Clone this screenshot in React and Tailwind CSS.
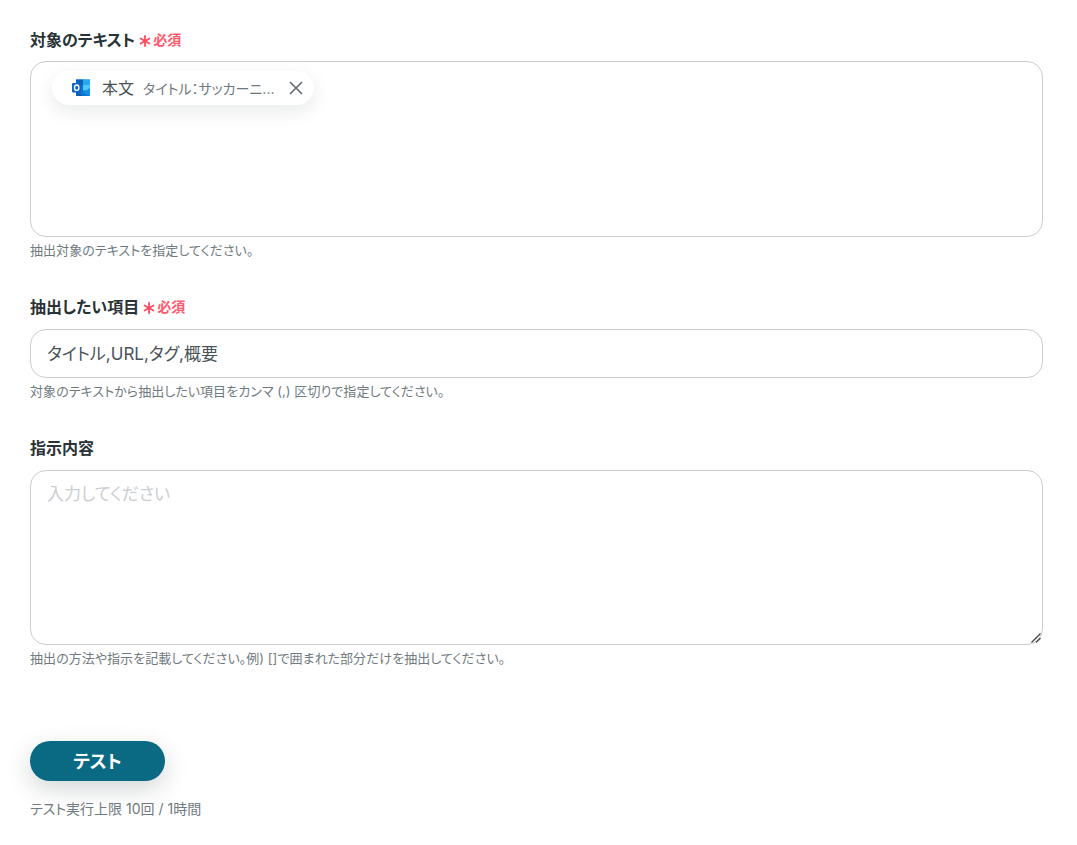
const font = { fontFamily: 'Inter, "Noto Sans CJK JP", sans-serif' };

function Label({ text, required }) {
  return (
    <div className="flex items-center h-[20px] text-[16px] font-bold leading-[20px] text-[#283237]">
      <span>{text}</span>
      {required && (
        <span className="ml-[4px] flex items-center text-[14px] font-bold text-[#ff5a6e]">
          <svg width="12" height="12" viewBox="0 0 12 12" className="mr-[2px] mt-[2px]" fill="none" stroke="#ff4a60" strokeWidth="1.8" strokeLinecap="round">
            <path d="M6 1V11M1.6 3.5L10.4 8.5M10.4 3.5L1.6 8.5" />
          </svg>
          必須
        </span>
      )}
    </div>
  );
}

function Help({ children }) {
  return <p className="mt-[5px] h-[16px] text-[13px] leading-[16px] tracking-[0.05px] text-[#6f7a80]">{children}</p>;
}

function Outlook() {
  return (
    <svg width="20" height="20" viewBox="0 0 20 20" className="shrink-0">
      <rect x="5" y="1.5" width="14" height="16.5" rx="1" fill="#0a78d4" />
      <rect x="5" y="1.5" width="7" height="5.5" fill="#0364b8" />
      <rect x="12" y="1.5" width="7" height="5.5" fill="#28a8ea" />
      <rect x="5" y="7" width="7" height="5.5" fill="#0078d4" />
      <rect x="12" y="7" width="7" height="5.5" fill="#50c8f4" />
      <path d="M5 12.5L12 18H6a1 1 0 0 1-1-1z" fill="#0a5fb0" />
      <path d="M19 10L12 14.5 19 18z" fill="#1490df" />
      <rect x="1" y="5" width="9.5" height="9.5" rx="1" fill="#1066c8" />
      <ellipse cx="5.7" cy="9.7" rx="2.2" ry="2.7" fill="none" stroke="#fff" strokeWidth="1.3" />
    </svg>
  );
}

export default function App() {
  return (
    <div style={font} className="w-[1077px] h-[845px] bg-white px-[30px] pt-[30px] overflow-hidden [font-feature-settings:'palt']">
      <Label text="対象のテキスト" required />
      <div className="mt-[11px] w-[1013px] h-[176px] rounded-[16px] border border-[#c9ccd2] pl-[21px] pt-[9px]">
        <div className="flex items-center w-[262px] h-[34px] rounded-full bg-white pl-[19px] shadow-[0_6px_18px_rgba(40,50,55,0.1)]">
          <Outlook />
          <span className="ml-[11px] w-[32px] text-[16px] text-[#4a5358] whitespace-nowrap">本文</span>
          <span className="ml-[9px] w-[136px] text-[14px] text-[#6f7a80] whitespace-nowrap">タイトル：サッカーニ...</span>
          <svg width="16" height="16" viewBox="0 0 16 16" className="ml-[9px] shrink-0" fill="none" stroke="#5c666b" strokeWidth="1.5">
            <path d="M2 2L14 14M14 2L2 14" />
          </svg>
        </div>
      </div>
      <Help>抽出対象のテキストを指定してください。</Help>

      <div className="mt-[39px]">
        <Label text="抽出したい項目" required />
      </div>
      <div className="mt-[12px] w-[1013px] h-[49px] rounded-[16px] border border-[#c9ccd2] px-[16px] pt-[2px] flex items-center text-[17px] text-[#4a5358]">
        タイトル,URL,タグ,概要
      </div>
      <Help>対象のテキストから抽出したい項目をカンマ (,) 区切りで指定してください。</Help>

      <div className="mt-[39px]">
        <Label text="指示内容" />
      </div>
      <div className="relative mt-[12px] w-[1013px] h-[175px]">
        <textarea
          readOnly
          placeholder="入力してください"
          style={font}
          className="block w-full h-full resize-none rounded-[16px] border border-[#c9ccd2] px-[16px] py-[11px] text-[17px] leading-[24px] outline-none [font-feature-settings:'palt'] placeholder:text-[#cbced2]"
        />
        <svg width="12" height="12" viewBox="0 0 12 12" className="absolute right-[1px] bottom-[1px]" fill="none" stroke="#4a4a4a" strokeWidth="1.4">
          <path d="M1.5 10.5L10.5 1.5M6 10.5L10.5 6" />
        </svg>
      </div>
      <Help>抽出の方法や指示を記載してください。例) []で囲まれた部分だけを抽出してください。</Help>

      <button className="block mt-[75px] w-[135px] h-[40px] rounded-full bg-[#0a6983] text-white text-[18px] font-bold shadow-[0_8px_24px_rgba(40,50,55,0.2)]">
        テスト
      </button>
      <p className="mt-[20px] text-[14px] leading-[16px] text-[#6f7a80]">テスト実行上限 10回 / 1時間</p>
    </div>
  );
}
